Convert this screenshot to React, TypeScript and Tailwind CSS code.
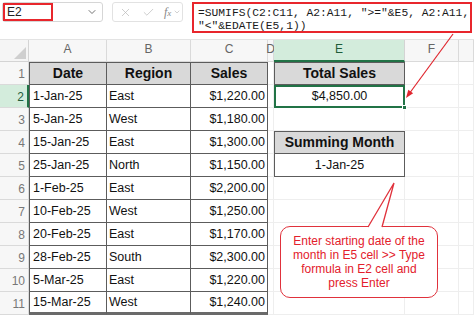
import { Check, ChevronDown, X } from "lucide-react";

const data = [
    ["1-Jan-25", "East", "$1,220.00"],
    ["5-Jan-25", "West", "$1,180.00"],
    ["15-Jan-25", "East", "$1,300.00"],
    ["25-Jan-25", "North", "$1,150.00"],
    ["1-Feb-25", "East", "$2,200.00"],
    ["10-Feb-25", "West", "$1,250.00"],
    ["20-Feb-25", "East", "$1,170.00"],
    ["28-Feb-25", "South", "$2,300.00"],
    ["5-Mar-25", "East", "$1,220.00"],
    ["15-Mar-25", "West", "$1,240.00"],
];

const cols = ["A", "B", "C", "D", "E", "F", ""];

function Toolbar() {
    return (
        <div className="h-[40px] flex items-start pt-[2px] pl-[2px] border-b border-[#e3e3e3]">
            <div className="w-[101px] h-[20px] border border-[#d6d6d6] rounded-[3px] flex items-center justify-between">
                <div className="w-[50px] h-[18px] border-2 border-[#e8262c] text-[12px] leading-[14px] pl-[2px] text-[#222]">E2</div>
                <ChevronDown size={12} strokeWidth={1.5} className="text-[#444] mr-[4px]" />
            </div>
            <div className="ml-[9px] w-[71px] h-[20px] border border-[#e2e2e2] rounded-[3px] flex items-center pl-[6px] text-[#b9b9b9]">
                <X size={13} strokeWidth={1.3} />
                <Check size={13} strokeWidth={1.3} className="ml-[10px]" />
                <span className="ml-[9px] text-[#888] italic font-['Liberation_Serif',serif] text-[12px] leading-none">
                    f<span className="text-[9px]">x</span>
                </span>
                <ChevronDown size={8} className="ml-[2px] text-[#bbb]" />
            </div>
            <div className="ml-[9px] w-[280px] h-[31px] border-2 border-[#e8262c] px-[4px] pt-[3px] font-['Liberation_Mono',monospace] text-[11.3px] leading-[13px] text-[#1a1a1a] whitespace-pre">
                {'=SUMIFS(C2:C11, A2:A11, ">="&E5, A2:A11,\n"<"&EDATE(E5,1))'}
            </div>
        </div>
    );
}

function ColHeaders() {
    return (
        <>
            <div className="bg-[#f5f5f5] border-r border-b border-[#d4d4d4] relative">
                <div className="absolute right-[2px] bottom-[2px] w-0 h-0 border-l-[12px] border-l-transparent border-b-[12px] border-b-[#cfcfcf]" />
            </div>
            {cols.map((c, i) => (
                <div
                    key={i}
                    className={
                        c === "E"
                            ? "bg-[#d3ecdc] border-b-2 border-b-[#217346] border-r border-r-[#d4d4d4] text-[#1f5c3a] text-[12px] flex items-end justify-center pb-[2px]"
                            : "bg-[#f7f7f7] border-r border-b border-[#dadada] text-[#666] text-[12px] flex items-end justify-center pb-[3px]"
                    }
                >
                    {c}
                </div>
            ))}
        </>
    );
}

function Row({ n }: { n: number }) {
    const sel = n === 2;
    const rec = n >= 2 ? data[n - 2] : null;
    const last = n === 11;
    const head = "bg-[#d9d9d9] font-bold text-[14px] flex items-center justify-center border-b border-r border-[#5c5c5c]";
    const cell = `flex items-center text-[12.5px] border-r border-[#5c5c5c] ${last ? "border-b-[3px] border-b-[#6a6a6a]" : "border-b"}`;
    const empty = "border-r border-b border-[#eeeeee]";

    let e = <div className={empty} />;
    if (n === 1) e = <div className={`${head} border-l border-t`}>Total Sales</div>;
    if (n === 2)
        e = (
            <div className="relative border-2 border-[#217346] text-[12.5px] flex items-center justify-center">
                $4,850.00
                <div className="absolute right-[-4px] bottom-[-4px] w-[5px] h-[5px] bg-[#217346] border border-white" />
            </div>
        );
    if (n === 4) e = <div className={`${head} border-l border-t`}>Summing Month</div>;
    if (n === 5) e = <div className="border-l border-r border-b border-[#5c5c5c] text-[12.5px] flex items-center justify-center">1-Jan-25</div>;

    return (
        <>
            <div
                className={
                    sel
                        ? "bg-[#d3ecdc] border-r-2 border-r-[#217346] border-b border-b-[#dadada] text-[#1f5c3a] text-[12px] flex items-center justify-end pr-[3px] pt-[2px]"
                        : "bg-[#f7f7f7] border-r border-b border-[#dadada] text-[#777] text-[12px] flex items-center justify-end pr-[3px] pt-[2px]"
                }
            >
                {n}
            </div>
            {n === 1 ? (
                <>
                    <div className={`${head} border-l border-t`}>Date</div>
                    <div className={`${head} border-t`}>Region</div>
                    <div className={`${head} border-t`}>Sales</div>
                </>
            ) : (
                <>
                    <div className={`${cell} border-l pl-[3px]`}>{rec![0]}</div>
                    <div className={`${cell} pl-[2px]`}>{rec![1]}</div>
                    <div className={`${cell} justify-end pr-[2px]`}>{rec![2]}</div>
                </>
            )}
            <div className={empty} />
            {e}
            <div className={empty} />
            <div className={empty} />
        </>
    );
}

export default function App() {
    return (
        <div className="w-[474px] h-[316px] relative overflow-hidden bg-white text-[#111] font-['Liberation_Sans',Arial,sans-serif]">
            <Toolbar />
            <div className="grid grid-cols-[29px_78px_84px_77px_6px_131px_54px_15px] grid-rows-[22px_repeat(11,23px)]">
                <ColHeaders />
                {Array.from({ length: 11 }, (_, i) => (
                    <Row key={i} n={i + 1} />
                ))}
            </div>

            <svg className="absolute inset-0 pointer-events-none" width="474" height="316">
                <line x1="453" y1="34" x2="409" y2="94" stroke="#e0262e" strokeWidth="1.2" />
                <polygon points="406,98 413.1,93.3 408.3,89.7" fill="#e0262e" />
            </svg>

            <div className="absolute left-[280px] top-[226px] w-[158px] h-[72px] border-[1.5px] border-[#e0323c] rounded-[10px] bg-white flex items-center justify-center text-center text-[12px] leading-[14px] text-[#e3202c]">
                <p>
                    Enter starting date of the
                    <br />
                    month in E5 cell &gt;&gt; Type
                    <br />
                    formula in E2 cell and
                    <br />
                    press Enter
                </p>
            </div>
            <svg className="absolute inset-0 pointer-events-none" width="474" height="316">
                <polygon points="368,227.5 394,183 382,227.5" fill="white" />
                <polyline points="368,227 394,183 382,227" fill="none" stroke="#e0323c" strokeWidth="1.3" />
            </svg>
        </div>
    );
}
